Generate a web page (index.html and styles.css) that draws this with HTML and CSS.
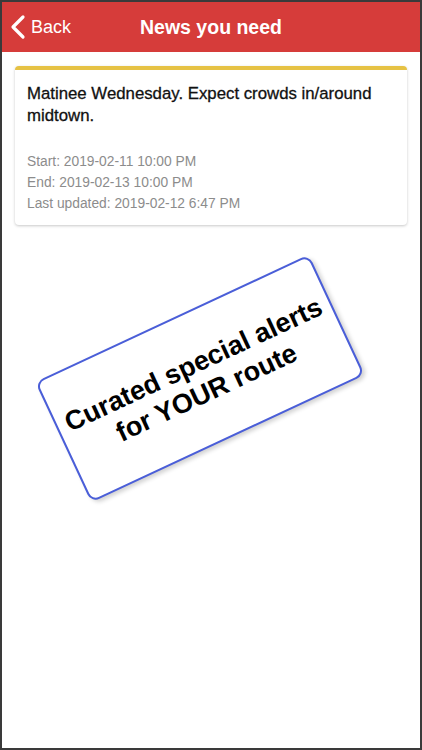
FILE: index.html
```html
<!DOCTYPE html>
<html>
<head>
<meta charset="utf-8">
<link rel="stylesheet" href="styles.css">
</head>
<body>
<div class="screen">
  <header class="nav">
    <div class="back">
      <svg class="chev" width="16" height="26" viewBox="0 0 16 26"><polyline points="13,3 3,13 13,23" fill="none" stroke="#fff" stroke-width="3.2" stroke-linecap="round" stroke-linejoin="round"/></svg>
      <span class="back-label">Back</span>
    </div>
    <h1 class="title">News you need</h1>
  </header>
  <div class="card">
    <p class="card-title">Matinee Wednesday. Expect crowds in/around midtown.</p>
    <div class="meta">
      <p class="meta-line">Start: 2019-02-11 10:00 PM</p>
      <p class="meta-line">End: 2019-02-13 10:00 PM</p>
      <p class="meta-line">Last updated: 2019-02-12 6:47 PM</p>
    </div>
  </div>
  <div class="sticker">
    <p class="sticker-text">Curated special alerts<br>for YOUR route</p>
  </div>
</div>
</body>
</html>
```
FILE: styles.css
```css
html, body {
  margin: 0;
  padding: 0;
  background: #fff;
}
.screen {
  width: 422px;
  height: 750px;
  box-sizing: border-box;
  border: 2px solid #3a3a3a;
  background: #fff;
  overflow: hidden;
  font-family: "Liberation Sans", Arial, sans-serif;
  display: flex;
  flex-direction: column;
}
.nav {
  height: 50px;
  background: #d63c3a;
  display: flex;
  align-items: center;
  position: relative;
  flex-shrink: 0;
}
.back {
  display: flex;
  align-items: center;
  padding-left: 8px;
  gap: 5px;
  color: #fff;
}
.chev {
  display: block;
}
.back-label {
  font-size: 18px;
  color: #fff;
}
.title {
  position: absolute;
  left: 0;
  right: 0;
  top: 0;
  bottom: 0;
  margin: 0;
  display: flex;
  align-items: center;
  justify-content: center;
  font-size: 19.5px;
  font-weight: bold;
  color: #fff;
  pointer-events: none;
}
.card {
  margin: 14px 13px 0 13px;
  border-top: 4px solid #e6c244;
  border-radius: 4px;
  background: #fff;
  box-shadow: 0 1px 3px rgba(0,0,0,0.22);
  padding: 13px 12px 11px 12px;
}
.card-title {
  margin: 0;
  font-size: 16.8px;
  line-height: 22px;
  color: #111;
  -webkit-text-stroke: 0.3px #111;
}
.meta {
  margin-top: 24px;
}
.meta-line {
  margin: 0;
  font-size: 13.8px;
  line-height: 21px;
  color: #8c8c8c;
}
.sticker {
  width: 302px;
  height: 133px;
  box-sizing: border-box;
  margin: 87px 0 0 47px;
  border: 2px solid #4a5ed8;
  border-radius: 9px;
  background: #fff;
  box-shadow: 2px 3px 4px rgba(0,0,0,0.18);
  transform: rotate(-25deg);
  display: flex;
  align-items: center;
  justify-content: center;
}
.sticker-text {
  margin: 0;
  font-family: "Liberation Sans", Arial, sans-serif;
  font-weight: bold;
  font-size: 27px;
  line-height: 31px;
  text-align: center;
  color: #000;
}
```
